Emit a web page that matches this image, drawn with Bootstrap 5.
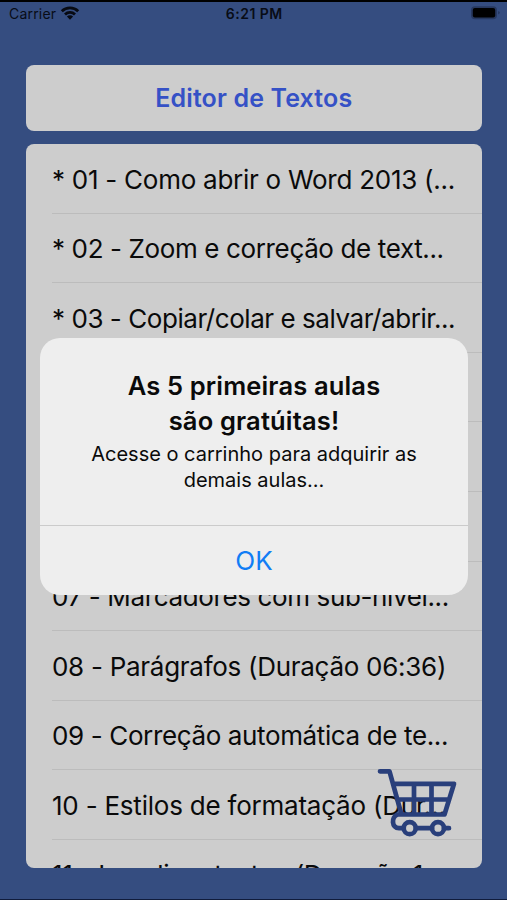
<!DOCTYPE html>
<html lang="pt-BR">
<head>
<meta charset="utf-8">
<meta name="viewport" content="width=device-width, initial-scale=1">
<title>Editor de Textos</title>
<link href="https://cdn.jsdelivr.net/npm/bootstrap@5.3.0/dist/css/bootstrap.min.css" rel="stylesheet">
<style>
body { font-family: Inter, "Liberation Sans", sans-serif; background: #354d80; color: #0a0a0a; }
.screen { height: 900px; padding: 0 25.5px 32px 26px; border-top: 2px solid #000; border-bottom: 1px solid #101c3c; }
.statusbar { height: 63px; margin: 0 -19px 0 -17px; padding-top: 3px; font-size: 14px; line-height: 17px; color: #080c16; }
.carrier { letter-spacing: .2px; }
.clock { font-size: 14px; letter-spacing: .5px; margin-left: -1px; }
.title-box { height: 66px; background: #cdcdcd; border-radius: 8px; color: #3551c6; font-size: 25px; letter-spacing: .13px; }
.lessons { height: 724px; margin-top: 13px; background: #cdcdcd; border-radius: 8px; }
.lesson { height: 69.6px; margin-left: 26px; padding-top: 1.5px; border-bottom: 1.5px solid #bcbcbc; font-size: 26px; line-height: 68px; letter-spacing: -.37px; white-space: nowrap; }
.t1 { letter-spacing: -.26px; }
.t3 { letter-spacing: -.45px; }
.t8, .t11 { letter-spacing: -.28px; }
.t10 { letter-spacing: -.22px; }
.alert-box { left: 40px; top: 336px; width: 428px; height: 257px; background: #eee; border-radius: 20px; z-index: 3; }
.alert-title { font-size: 25.5px; line-height: 35px; letter-spacing: .16px; margin: 6px 0 4px; }
.alert-text { font-size: 20px; line-height: 25.5px; }
.alert-ok { height: 70px; border-top: 1.5px solid #cbcbcb; color: #117df5; font-size: 26px; }
.cart { left: 375px; top: 766px; z-index: 2; }
</style>
<script src="https://cdn.jsdelivr.net/npm/bootstrap@5.3.0/dist/js/bootstrap.bundle.min.js"></script>
</head>
<body class="overflow-hidden">
<main class="screen position-relative d-flex flex-column">
  <header class="statusbar row g-0 flex-shrink-0">
    <div class="col d-flex gap-1">
      <span class="carrier">Carrier</span>
      <svg width="20" height="16" viewBox="0 0 20 16" fill="none" stroke="#070a12" stroke-width="2.8"><path d="M1.8 6.2a11.7 11.7 0 0 1 16.4 0M5 9.5a7.1 7.1 0 0 1 10 0"/><path d="M10 14.8 6.9 11.6a4.4 4.4 0 0 1 6.2 0z" fill="#070a12" stroke="none"/></svg>
    </div>
    <div class="col-auto clock fw-semibold">6:21 PM</div>
    <div class="col d-flex justify-content-end">
      <svg width="30" height="16" viewBox="0 0 30 16"><rect x="0" y="1.2" width="26" height="13" rx="4" fill="#27385f"/><rect x="1.8" y="3" width="22.4" height="9.5" rx="2" fill="#000"/><path d="M27.5 6q2 1.7 0 3.4z" fill="#1c294a"/></svg>
    </div>
  </header>
  <h1 class="title-box d-flex align-items-center justify-content-center fw-semibold mb-0 flex-shrink-0"><span>Editor de Textos</span></h1>
  <ul class="lessons list-unstyled overflow-hidden mb-0 flex-shrink-0">
    <li class="lesson"><span class="t1">* 01 - Como abrir o Word 2013 (...</span></li>
    <li class="lesson">* 02 - Zoom e correção de text...</li>
    <li class="lesson"><span class="t3">* 03 - Copiar/colar e salvar/abrir...</span></li>
    <li class="lesson"></li>
    <li class="lesson"></li>
    <li class="lesson"></li>
    <li class="lesson">07 - Marcadores com sub-nível...</li>
    <li class="lesson"><span class="t8">08 - Parágrafos (Duração 06:36)</span></li>
    <li class="lesson">09 - Correção automática de te...</li>
    <li class="lesson"><span class="t10">10 - Estilos de formatação (Dur...</span></li>
    <li class="lesson"><span class="t11">11 - Localizar textos (Duração 1...</span></li>
  </ul>
  <svg class="cart position-absolute" width="84" height="72" viewBox="375 768 84 72" fill="none" stroke="#293f7b" stroke-width="4.7" stroke-linecap="round" stroke-linejoin="round">
    <path d="M380 771.3H389.5L401.5 814.5H444.5L454 783.8H393.5M397.5 799.5H449M414 784V814M431.5 784V814M401.5 814.5H397.5C391 817 391.5 828.2 399 828.2H403M416 828.2H432M444 828.2H449"/>
    <circle cx="409.7" cy="828.2" r="6"/><circle cx="438" cy="828.2" r="6"/>
  </svg>
  <section class="alert-box position-absolute d-flex flex-column text-center overflow-hidden" role="dialog">
    <div class="flex-grow-1 d-flex flex-column pt-4">
      <h2 class="alert-title fw-semibold">As 5 primeiras aulas<br>são gratúitas!</h2>
      <p class="alert-text mb-0">Acesse o carrinho para adquirir as<br>demais aulas...</p>
    </div>
    <button type="button" class="alert-ok btn rounded-0 border-start-0 border-end-0 border-bottom-0 p-0">OK</button>
  </section>
</main>
</body>
</html>
